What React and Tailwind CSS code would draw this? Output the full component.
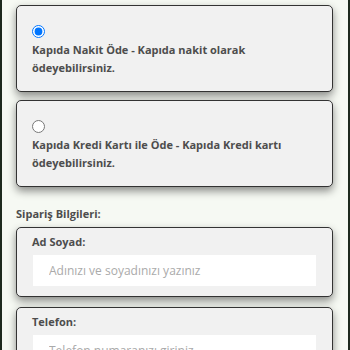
import { useState } from 'react';

const PaymentOption = ({ id, checked, onSelect, children }) => (
  <label
    htmlFor={id}
    className="block rounded-[5px] border border-[#333] bg-[#f1f1f1] px-[15px] pt-[19px] pb-[14px] shadow-[0_4px_8px_rgba(0,0,0,0.45)] cursor-pointer"
  >
    <input
      id={id}
      type="radio"
      name="payment"
      checked={checked}
      onChange={onSelect}
      className="m-0 block h-[13px] w-[13px] accent-[#0075ff]"
    />
    <p className="mt-[3px] text-[11px] font-bold leading-[18px] text-[#4d4d4d]">{children}</p>
  </label>
);

const Field = ({ label, placeholder }) => (
  <div className="rounded-[5px] border border-[#333] bg-[#f1f1f1] px-[15px] pt-[5px] pb-[10px] shadow-[0_4px_8px_rgba(0,0,0,0.45)]">
    <div className="text-[11px] font-bold leading-[18px] text-[#4d4d4d]">{label}</div>
    <input
      type="text"
      placeholder={placeholder}
      className="mt-[4px] ml-px block h-[31px] w-[283px] bg-white px-[16px] text-[12px] text-[#555] outline-none placeholder:text-[#aaa]"
    />
  </div>
);

export default function App() {
  const [payment, setPayment] = useState('cash');

  return (
    <div
      className="h-[350px] overflow-hidden border-x-2 border-[#1e2a1e] bg-[#f6f9f3] pl-[14px] pr-[15px] pt-[5px]"
      style={{ fontFamily: '"Open Sans", "Noto Sans", sans-serif' }}
    >
      <PaymentOption id="cash" checked={payment === 'cash'} onSelect={() => setPayment('cash')}>
        Kapıda Nakit Öde - Kapıda nakit olarak ödeyebilirsiniz.
      </PaymentOption>

      <div className="mt-[8px]">
        <PaymentOption id="card" checked={payment === 'card'} onSelect={() => setPayment('card')}>
          Kapıda Kredi Kartı ile Öde - Kapıda Kredi kartı ödeyebilirsiniz.
        </PaymentOption>
      </div>

      {/* Order info */}
      <div className="mt-[18px] text-[11px] font-bold leading-[18px] text-[#4d4d4d]">Sipariş Bilgileri:</div>

      <div className="mt-[4px] flex flex-col gap-[10px]">
        <Field label="Ad Soyad:" placeholder="Adınızı ve soyadınızı yazınız" />
        <Field label="Telefon:" placeholder="Telefon numaranızı giriniz" />
      </div>
    </div>
  );
}
